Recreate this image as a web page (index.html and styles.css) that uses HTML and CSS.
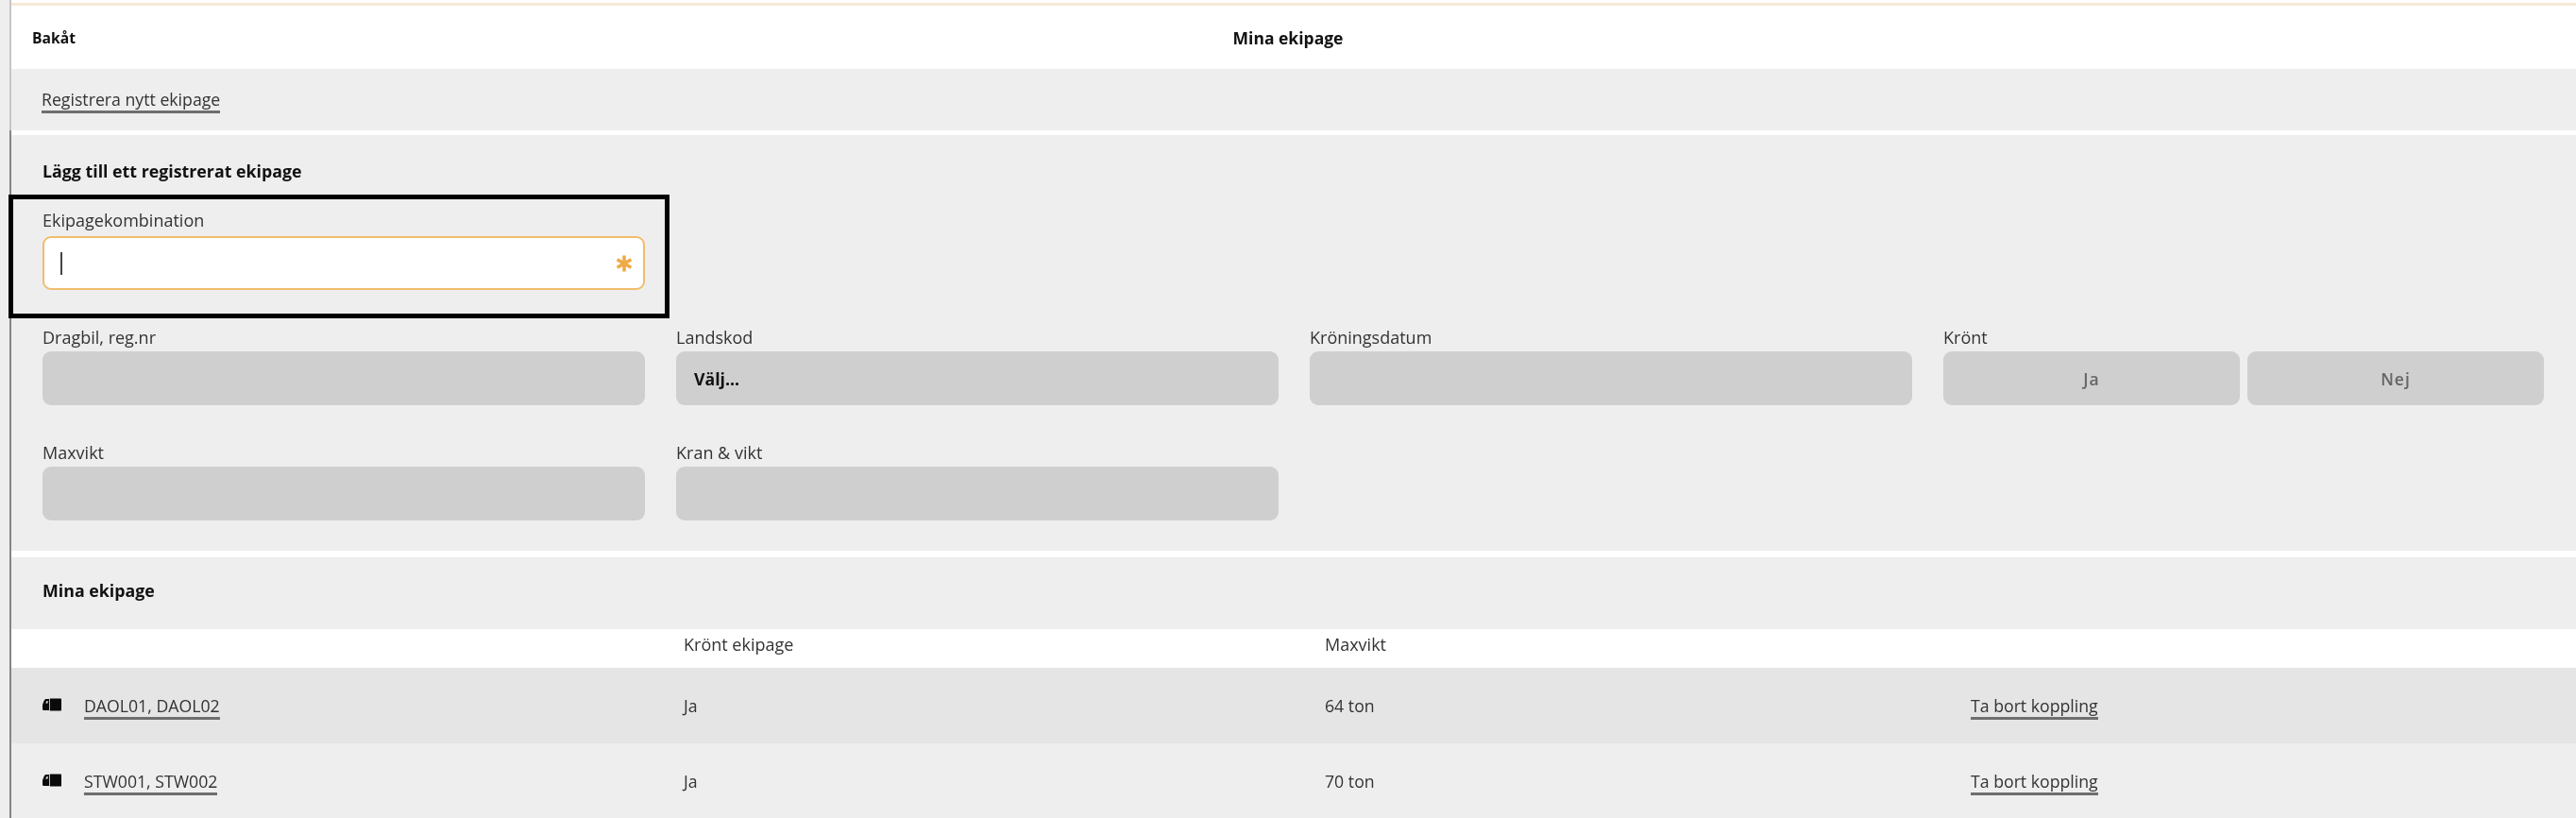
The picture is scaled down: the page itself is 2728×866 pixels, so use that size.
FILE: index.html
```html
<!DOCTYPE html>
<html lang="sv">
<head>
<meta charset="utf-8">
<title>Mina ekipage</title>
<link rel="stylesheet" href="styles.css">
</head>
<body>
<div class="page">
  <div class="rail"></div>
  <main class="content">
    <div class="upper">
      <div class="topline"></div>
      <header class="header">
        <a class="back">Bakåt</a>
        <h1 class="title">Mina ekipage</h1>
      </header>
      <section class="band-register">
        <a class="link">Registrera nytt ekipage</a>
      </section>
    </div>
    <div class="lower">
      <section class="panel-form">
        <h2 class="heading">Lägg till ett registrerat ekipage</h2>
        <div class="highlight"></div>
        <div class="combo">
          <label class="label label-first">Ekipagekombination</label>
          <div class="input-active">
            <span class="caret"></span>
            <svg class="required" viewBox="0 0 18 18" aria-hidden="true"><path d="M9 .5v17M1.6 4.7l14.8 8.6M16.4 4.7 1.6 13.3"/></svg>
          </div>
        </div>
        <div class="form-grid">
          <div class="field">
            <label class="label">Dragbil, reg.nr</label>
            <div class="box"></div>
          </div>
          <div class="field">
            <label class="label">Landskod</label>
            <div class="box box-select">Välj...</div>
          </div>
          <div class="field">
            <label class="label">Kröningsdatum</label>
            <div class="box"></div>
          </div>
          <div class="field">
            <label class="label">Krönt</label>
            <div class="toggle">
              <div class="box box-btn">Ja</div>
              <div class="box box-btn">Nej</div>
            </div>
          </div>
          <div class="field">
            <label class="label">Maxvikt</label>
            <div class="box"></div>
          </div>
          <div class="field">
            <label class="label">Kran &amp; vikt</label>
            <div class="box"></div>
          </div>
        </div>
      </section>
      <section class="panel-list">
        <h2 class="heading">Mina ekipage</h2>
      </section>
      <div class="table">
        <div class="row row-head">
          <span class="cell"></span>
          <span class="cell cell-head">Krönt ekipage</span>
          <span class="cell cell-head">Maxvikt</span>
          <span class="cell"></span>
        </div>
        <div class="row row-dark">
          <span class="cell cell-name">
            <svg class="truck" viewBox="0 0 20 14" aria-hidden="true"><path d="M7 1H4.2C3 1 2.3 1.6 1.8 2.6L.6 5.4C.2 6.2 0 7 0 7.8v3.4C0 12.4.6 13 1.6 13H7zM7.8 .6H19c.6 0 1 .4 1 1V12.4c0 .6-.4 1-1 1H7.8z"/><path class="truck-window" d="M4.6 3h1v2.6H3.2z"/></svg>
            <a class="link">DAOL01, DAOL02</a>
          </span>
          <span class="cell">Ja</span>
          <span class="cell">64 ton</span>
          <span class="cell"><a class="link">Ta bort koppling</a></span>
        </div>
        <div class="row row-light">
          <span class="cell cell-name">
            <svg class="truck" viewBox="0 0 20 14" aria-hidden="true"><path d="M7 1H4.2C3 1 2.3 1.6 1.8 2.6L.6 5.4C.2 6.2 0 7 0 7.8v3.4C0 12.4.6 13 1.6 13H7zM7.8 .6H19c.6 0 1 .4 1 1V12.4c0 .6-.4 1-1 1H7.8z"/><path class="truck-window" d="M4.6 3h1v2.6H3.2z"/></svg>
            <a class="link">STW001, STW002</a>
          </span>
          <span class="cell">Ja</span>
          <span class="cell">70 ton</span>
          <span class="cell"><a class="link">Ta bort koppling</a></span>
        </div>
      </div>
    </div>
  </main>
</div>
</body>
</html>
```
FILE: styles.css
```css
* { box-sizing: border-box; }
html, body { margin: 0; padding: 0; background: #fff; }
body {
  width: 2728px;
  height: 866px;
  overflow: hidden;
  font-family: "Open Sans", "Noto Sans", sans-serif;
  font-size: 17.7px;
  color: #2b2b2b;
}
.page {
  height: 866px;
  display: flex;
  filter: blur(0.5px);
}
.rail { width: 10px; flex: none; background: #eeeeee; }
.content { flex: 1; min-width: 0; background: #fff; }
.upper { border-left: 2px solid #c6c6c6; padding-top: 3px; }
.lower { border-left: 2px solid #858585; padding-top: 5px; }
.topline { height: 3px; background: #f5ead6; }
.header {
  height: 67px;
  position: relative;
  display: flex;
  align-items: center;
  justify-content: center;
}
.back {
  position: absolute;
  left: 22px;
  top: 23px;
  font-size: 15.7px;
  font-weight: 700;
  color: #111;
}
.title {
  margin: 0 0 0 -12px;
  font-size: 17.5px;
  font-weight: 700;
  color: #111;
}
.band-register {
  height: 65px;
  padding: 20px 0 0 32px;
  background: #eeeeee;
}
.link {
  display: inline-block;
  color: #333;
  font-size: 17.7px;
  line-height: 24px;
  border-bottom: 3px solid #6e6e6e;
}
.panel-form {
  position: relative;
  height: 440px;
  padding: 26px 0 0 33px;
  background: #eeeeee;
}
.heading {
  margin: 0;
  font-size: 17.8px;
  line-height: 24px;
  font-weight: 700;
  color: #111;
}
.highlight {
  position: absolute;
  left: -3px;
  top: 63px;
  width: 700px;
  height: 131px;
  border: 5px solid #000;
}
.combo { margin-top: 28px; width: 638px; }
.label {
  display: block;
  height: 24px;
  font-size: 18px;
  line-height: 24px;
  color: #333;
}
.label-first { margin-bottom: 5px; }
.input-active {
  height: 57px;
  background: #fff;
  border: 2px solid #f0bd6c;
  border-radius: 9px;
  display: flex;
  align-items: center;
  justify-content: space-between;
  padding: 0 11px 0 17px;
}
.caret { width: 2px; height: 24px; background: #444; }
.required {
  width: 18px;
  height: 18px;
  stroke: #eeaa44;
  stroke-width: 3.5;
  fill: none;
}
.form-grid {
  display: grid;
  grid-template-columns: 638px 638px 638px 636px;
  column-gap: 33px;
  row-gap: 38px;
  margin-top: 38px;
}
.box {
  height: 57px;
  background: #cfcfcf;
  border-radius: 9px;
}
.field .label { margin-bottom: 3px; }
.box-select {
  display: flex;
  align-items: center;
  padding-left: 19px;
  font-size: 17.7px;
  font-weight: 700;
  color: #111;
}
.toggle { display: flex; gap: 8px; }
.box-btn {
  flex: 1;
  display: flex;
  align-items: center;
  justify-content: center;
  font-weight: 600;
  font-size: 17.5px;
  letter-spacing: 1px;
  color: #666;
}
.panel-list {
  height: 76px;
  margin-top: 7px;
  padding: 23px 0 0 33px;
  background: #eeeeee;
}
.row {
  display: grid;
  grid-template-columns: 679px 679px 684px 1fr;
  padding-left: 33px;
  align-items: center;
}
.row .link { margin-bottom: -3px; vertical-align: top; }
.row-head { height: 41px; background: #fff; align-items: start; padding-top: 4px; }
.row-dark { height: 80px; background: #e5e5e5; }
.row-light { height: 80px; background: #eeeeee; }
.cell { font-size: 17.7px; line-height: 24px; color: #333; }
.cell-head { font-size: 18px; }
.cell-name { display: flex; align-items: center; gap: 24px; }
.truck { width: 20px; height: 14px; fill: #0a0a0a; flex: none; margin-top: -2px; }
.truck-window { fill: #e5e5e5; }
.row-light .truck-window { fill: #eeeeee; }
```
